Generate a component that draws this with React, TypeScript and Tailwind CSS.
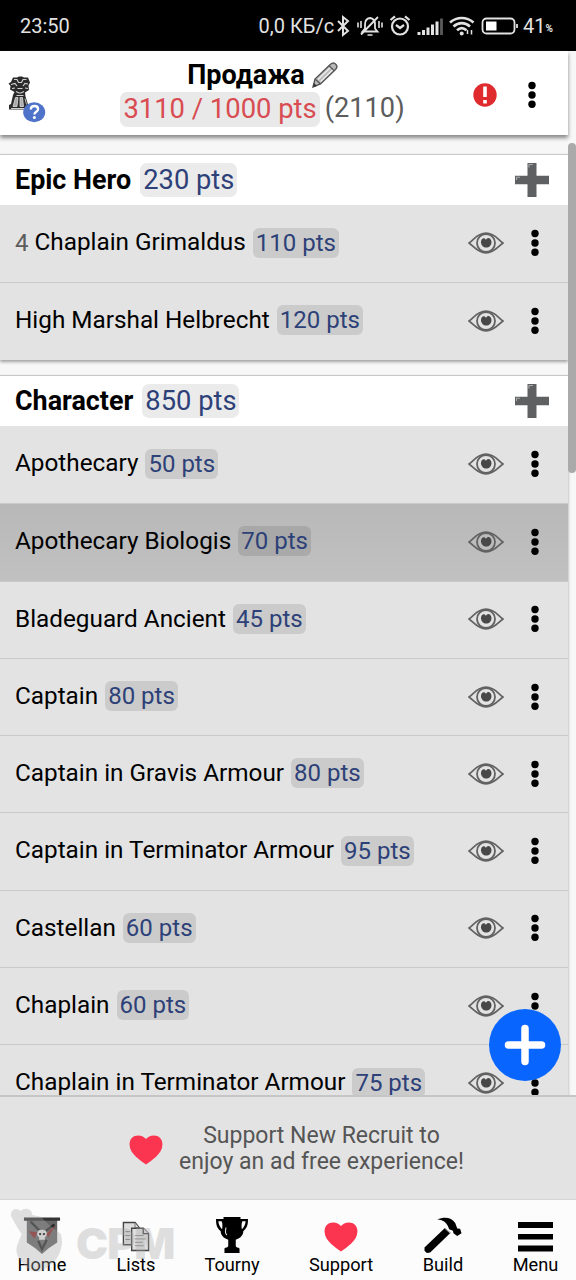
import type { ReactNode } from 'react';

interface Unit {
  name: string;
  pts: number;
  count?: number;
  selected?: boolean;
}

interface Category {
  name: string;
  pts: number;
  units: Unit[];
}

const categories: Category[] = [
  {
    name: 'Epic Hero',
    pts: 230,
    units: [
      { name: 'Chaplain Grimaldus', pts: 110, count: 4 },
      { name: 'High Marshal Helbrecht', pts: 120 },
    ],
  },
  {
    name: 'Character',
    pts: 850,
    units: [
      { name: 'Apothecary', pts: 50 },
      { name: 'Apothecary Biologis', pts: 70, selected: true },
      { name: 'Bladeguard Ancient', pts: 45 },
      { name: 'Captain', pts: 80 },
      { name: 'Captain in Gravis Armour', pts: 80 },
      { name: 'Captain in Terminator Armour', pts: 95 },
      { name: 'Castellan', pts: 60 },
      { name: 'Chaplain', pts: 60 },
      { name: 'Chaplain in Terminator Armour', pts: 75 },
    ],
  },
];

function Dots() {
  return (
    <svg width="10" height="28" viewBox="0 0 10 28" className="shrink-0">
      <circle cx="5" cy="4.5" r="3.7" />
      <circle cx="5" cy="14" r="3.7" />
      <circle cx="5" cy="23.3" r="3.7" />
    </svg>
  );
}

function Eye() {
  return (
    <svg width="36" height="24" viewBox="0 0 36 24" fill="none" stroke="#626262" className="shrink-0">
      <path d="M1 12C5.500 9 9.500 2.200 18 2.200S30.500 9 35 12c-4.500 3-8.500 9.800-17 9.800S5.500 15 1 12z" strokeWidth="1.700" />
      <circle cx="18" cy="12" r="9" strokeWidth="1.800" />
      <path d="M14 8c1.700-1.400 3-.8 4 .8 1.200-2 3-2.200 4.400-.8 1.700 2 1.400 5.200-.4 7-2 2-5.500 2-7.500 0-1.900-1.900-2.100-5.100-.5-7z" fill="#484848" stroke="none" />
    </svg>
  );
}

function HeavyPlus() {
  return (
    <svg width="34" height="34" viewBox="0 0 34 34" className="shrink-0">
      <path d="M12.500 0h9v12.800H34v8.400H21.500V34h-9V21.200H0v-8.400h12.500z" fill="#5e6062" />
      <path d="M14 4.500V1.500h4M1.500 17v-2.700h3.500" fill="none" stroke="#a5a7a8" strokeWidth="1.100" />
    </svg>
  );
}

function Heart() {
  return (
    <svg width="34" height="30" viewBox="0 0 34 31" className="shrink-0">
      <path d="M17 30.500C12 26.500 0 20 0 9.500 0 4 4 .5 8.800.5c3.700 0 6.500 1.600 8.200 3.700C18.700 2.100 21.500.5 25.200.5 30 .5 34 4 34 9.500c0 10.500-12 17-17 21z" fill="#fb3550" />
    </svg>
  );
}

function Pencil() {
  return (
    <svg width="26" height="26" viewBox="0 0 26 26">
      <path d="M1 25l2-8L18.500 2.300c1.800-1.600 4-1.500 5.300-.1 1.400 1.400 1.300 3.600-.3 5.200L8.500 22z" fill="#b8b8b8" stroke="#555" strokeWidth="1.400" />
      <path d="M6 17.500L19 5M8.500 19.500L21.500 7" stroke="#ededed" strokeWidth="1.300" />
      <path d="M3 17l5.500 5M17 3.700l5.300 5" stroke="#555" strokeWidth="1.200" />
      <path d="M1 25l1-4 3 3z" fill="#333" />
    </svg>
  );
}

function StatueLogo() {
  return (
    <svg width="38" height="48" viewBox="0 0 38 48">
      <path d="M5 1.500h4L11 .5h3l2 1h4l2 5-1.500 3 .5 4.500-4 2.500.5 4 2.500 8 1 5H1v-4.500l2-1 2-9 1.500-3L2 13.500l.5-3.500L.5 7.500 3 6z" fill="#2b2b2b" />
      <path d="M6 3.500h3l1.500 3h3l1.500-3h3.500M3 8.500l4-1 2 2.500M20 8l-3-.5-2 2.500M4 12.500l3-.5M17 12l3 .5M9.500 12.500h5M8 15.500l3 1.500h2l3-1.500M8.500 19.500h7" stroke="#d0d0d0" strokeWidth="1.200" fill="none" />
      <path d="M7.500 21.500l-2.500 9h4l1-9zM12 21.500v9h3.500l-1-9zM17 22.500l1.500 6" fill="#a9a9a9" stroke="#dedede" strokeWidth=".8" />
      <path d="M3 32.500h14" stroke="#d0d0d0" strokeWidth="1" />
      <ellipse cx="26.200" cy="36.300" rx="11" ry="10" fill="#4e73c9" />
      <path d="M22.800 33.500c0-2.500 1.600-3.500 3.600-3.500s3.700 1.200 3.700 3.200c0 2.600-3.700 2.600-3.700 5.200" fill="none" stroke="#fff" strokeWidth="2.300" />
      <circle cx="26.400" cy="41.500" r="1.500" fill="#fff" />
    </svg>
  );
}

function StatusIcons() {
  return (
    <svg width="184" height="24" viewBox="0 0 184 24" fill="none" stroke="#e2e2e2" strokeWidth="1.800">
      {/* bluetooth */}
      <path d="M2 7l10 10-5 4V3l5 4L2 17" strokeWidth="2" />
      {/* muted bell */}
      <path d="M26.500 17.500h15l-2.500-3v-4c0-4-2-6-5-6.500-4 .5-5 3-5 6.500v4zM25 20.500L42 3" />
      <path d="M31.500 21h5M22 8.500v5M25 7v7M43 7v7M46 8.500v5" strokeWidth="1.600" />
      {/* alarm */}
      <circle cx="64" cy="12.500" r="8" strokeWidth="2.200" />
      <path d="M60 11l4 3 4-3M54.500 6L59 2.300M73.500 6L69 2.300" strokeWidth="2.200" />
      {/* signal */}
      <path d="M83 21v-3M87.500 21v-5M92 21V13.500M96.500 21V10.500M101 21V7.500" strokeWidth="3" />
      <path d="M105.500 21V4.500" stroke="#5b5b5b" strokeWidth="2.800" />
      {/* wifi */}
      <path d="M114 8.500c7-6 16.500-6 23.500 0M117.500 12.500c5-4.500 11.500-4.500 16.500 0M121 16.200c3-2.700 6.500-2.700 9.500 0" strokeWidth="2.600" />
      <circle cx="125.700" cy="19.600" r="2" fill="#e2e2e2" stroke="none" />
      <path d="M131.500 20v-4M135.500 16v4.500" strokeWidth="1.500" />
      {/* battery */}
      <rect x="146.500" y="4.500" width="32" height="15" rx="4" />
      <rect x="150" y="7.500" width="10.500" height="9" fill="#fff" stroke="none" />
      <path d="M181 10v4" />
    </svg>
  );
}

function Points({ value, large }: { value: number; large?: boolean }) {
  return large ? (
    <span className="ml-[9px] flex h-[34px] items-center rounded-[7px] bg-[#ebebeb] px-[3px] text-[27.3px] font-normal whitespace-nowrap text-[#2d4178]">{value} pts</span>
  ) : (
    <span className="ml-[7px] flex h-[30px] items-center rounded-[6px] bg-black/10 px-[3px] text-[24px] whitespace-nowrap text-[#2d4178]">{value} pts</span>
  );
}

function CategoryCard({ category }: { category: Category }) {
  return (
    <section className="w-[568px] border-t border-[#c8c8c8] shadow-[0_2px_3px_#a0a0a0]">
      <div className="flex h-[50px] items-center bg-white pr-[19px] pl-[15px]">
        <h2 className="text-[26.900px] font-bold">{category.name}</h2>
        <Points value={category.pts} large />
        <span className="ml-auto"><HeavyPlus /></span>
      </div>
      {category.units.map((unit, i) => (
        <div
          key={unit.name}
          className={`flex h-[77.3px] items-center pr-[28px] pb-[2px] pl-[15px] ${i ? 'border-t border-[#c9c9c9]' : ''} ${
            unit.selected ? 'bg-linear-to-b from-[#b8b8b8] to-[#c1c1c1]' : 'bg-[#e3e3e3]'
          }`}
        >
          {unit.count && <span className="mr-[6px] text-[24px] text-[#5c5c5c]">{unit.count}</span>}
          <span className="text-[24.300px] whitespace-nowrap">{unit.name}</span>
          <Points value={unit.pts} />
          <div className="mt-[1px] ml-auto flex items-center gap-[26px]">
            <Eye />
            <Dots />
          </div>
        </div>
      ))}
    </section>
  );
}

function NavItem({ label, width, children }: { label: string; width: string; children: ReactNode }) {
  return (
    <div className={`flex shrink-0 flex-col items-center ${width}`}>
      <div className="flex h-[40px] items-center">{children}</div>
      <span className="text-[18.200px] leading-[24px]">{label}</span>
    </div>
  );
}

export default function App() {
  return (
    <div className="relative flex h-[1280px] w-[576px] flex-col overflow-hidden bg-[#f7f7f7] font-[Roboto,sans-serif] text-black">
      <div className="flex h-[51px] shrink-0 items-center bg-black pr-[23px] pl-5 text-[20px] text-[#e2e2e2]">
        <span>23:50</span>
        <span className="mr-[2px] ml-auto">0,0 КБ/с</span>
        <StatusIcons />
        <span className="ml-[3px]">41</span>
        <span className="mt-[5px] text-[10px] font-bold">%</span>
      </div>

      <header className="z-10 flex h-[84px] w-[568px] shrink-0 bg-white pl-2 shadow-[0_3px_4px_#888]">
        <div className="mt-[25px] w-[112px]"><StatueLogo /></div>
        <div className="flex w-[285px] flex-col items-center">
          <div className="mt-[8px] flex h-[32px] items-center gap-[7px]">
            <h1 className="text-[27px] font-bold">Продажа</h1>
            <Pencil />
          </div>
          <div className="-mt-[1px] flex items-center text-[27.400px] whitespace-nowrap">
            <span className="flex h-[35px] items-center rounded-[7px] bg-[#e9e9e9] px-[3px] text-[#d84c52]">3110 / 1000 pts</span>
            <span className="-mt-[2px] ml-[5px] text-[27.200px] text-[#5c5c5c]">(2110)</span>
          </div>
        </div>
        <div className="mt-[3px] ml-auto flex items-center gap-[30px] pr-[31px]">
          <svg width="24" height="24" viewBox="0 0 24 24">
            <circle cx="12" cy="12" r="11.700" fill="#df2b2e" />
            <path d="M12 3.500v10.500M12 17v3.500" stroke="#fff" strokeWidth="3.600" />
          </svg>
          <Dots />
        </div>
      </header>

      <main className="flex min-h-0 flex-1 flex-col gap-[15.400px] overflow-hidden pt-[19px]">
        {categories.map(category => (
          <CategoryCard key={category.name} category={category} />
        ))}
      </main>

      <div className="flex h-[104px] shrink-0 items-center justify-center gap-[16px] border-t-2 border-[#c6c6c6] bg-[#e3e3e3] pl-[17px] text-center text-[23px] leading-[26px] text-[#555]">
        <span className="mt-[3px]"><Heart /></span>
        <p className="mt-[1px]">Support New Recruit to<br />enjoy an ad free experience!</p>
      </div>

      <nav className="relative flex h-[81px] shrink-0 border-t border-[#d5d5d5] bg-[#fcfcfc] pt-[13px]">
        <NavItem label="Home" width="w-[84px]">
          <svg width="38" height="38" viewBox="0 0 40 40" className="mt-[4px]">
            <path d="M4 4h32v24l-9 6-7 6-7-6-9-6z" fill="#666" />
            <path d="M1 1.500h38v3.500H1z" fill="#343434" />
            <path d="M6 16l9 1-3 7zM34 10l-11 10 4 2z" fill="#8d2929" />
            <path d="M8 6l9 9M33 9l-12 9M16 26l4 9 5-10" stroke="#292929" strokeWidth="2.500" fill="none" />
            <path d="M15 18.500c0-3 2-4 5-4s5 1 5 4-1 3.500-2 3.500v3h-6v-3c-1 0-2-.5-2-3.500z" fill="#e5e5e5" />
            <circle cx="18" cy="19" r="1.200" />
            <circle cx="22" cy="19" r="1.200" />
          </svg>
        </NavItem>
        <NavItem label="Lists" width="w-[104px]">
          <svg width="28" height="31" viewBox="0 0 28 32" stroke="#444" strokeWidth="1.400" fill="#dedede" className="mt-[6px]">
            <path d="M1 1.500h12l4 5v18H1z" />
            <path d="M13 2v5h4M3 11h5M3 15h5M3 19h5" stroke="#777" strokeWidth="1" />
            <path d="M9.500 7.500h12l5.500 5.500v17.500H9.500z" />
            <path d="M21.500 7.500V13H27" />
            <path d="M13 15h9M13 18.500h11M13 22h8M13 25.500h9" stroke="#888" strokeWidth="1" />
          </svg>
        </NavItem>
        <NavItem label="Tourny" width="w-[88px]">
          <svg width="32" height="38" viewBox="0 0 34 38" className="mt-[3px]">
            <path d="M8 0h18v2h8c0 7-1 9-5 13 0 4-3 7.500-8 9v7c1 2 4 1 4 3v4H9v-4c0-2 3-1 4-3v-7c-5-1.500-8-5-8-9C1 11 0 9 0 2h8zM2.500 4.500c.3 3.500 1.500 6 4 8.500.5-3 .5-6-.5-8.500zM31.500 4.500H28c-1 2.500-1 5.500-.5 8.500 2.500-2.500 3.700-5 4-8.500z" fillRule="evenodd" />
            <path d="M10.500 11c0 4-2 5 1 8" stroke="#ddd" strokeWidth="1.200" fill="none" />
          </svg>
        </NavItem>
        <NavItem label="Support" width="w-[130px]">
          <span className="mt-[8px]"><Heart /></span>
        </NavItem>
        <NavItem label="Build" width="w-[74px]">
          <svg width="38" height="37" viewBox="0 0 40 38" className="mt-[4px]">
            <path d="M14 2c8-3 15-2 19 4l2 5.500 3 .5 1.500 4.500-4.500 3-4-3-.5-2.500-4-1.500c-1.500-5-4-8-8-9.500z" />
            <path d="M22 11l6 5L6.500 37 3 37.500.5 35v-3.500z" />
            <path d="M22 11.500l5.500 5" stroke="#c8c8c8" strokeWidth="1" />
          </svg>
        </NavItem>
        <NavItem label="Menu" width="w-[111px]">
          <svg width="35" height="30" viewBox="0 0 35 30" className="mt-[7px]">
            <path d="M0 0h35v6H0zM0 12h35v5.500H0zM0 23.500h35v6H0z" />
          </svg>
        </NavItem>
        {/* stamp in the corner */}
        <div className="pointer-events-none absolute top-[6px] left-[10px] flex text-[#a8a8a8] opacity-35">
          <svg width="54" height="68" viewBox="0 0 56 68" fill="currentColor">
            <path d="M1 9C0 3 6-1 11 4c5-5 12-2 12 4l9 2 8 8 13 10 1 8c-1 12-6 20-13 24-8 9-19 9-26 0C7 52 5 45 8 38l4-10-5-8z" />
          </svg>
          <span className="mt-[11px] ml-[12px] font-[Inter,sans-serif] text-[43px] leading-[52px] font-black tracking-[-1px]">CPM</span>
        </div>
      </nav>

      <div className="absolute top-[143px] right-0 h-[330px] w-[8px] rounded-full bg-[#aaa]" />
      <button className="absolute top-[1009px] left-[489px] z-10 flex size-[72px] items-center justify-center rounded-full bg-[#0866ff]">
        <svg width="42" height="42" viewBox="0 0 42 42" stroke="#fff" strokeWidth="7.500" strokeLinecap="round">
          <path d="M21 4.500v33M4.500 21h33" />
        </svg>
      </button>
    </div>
  );
}
